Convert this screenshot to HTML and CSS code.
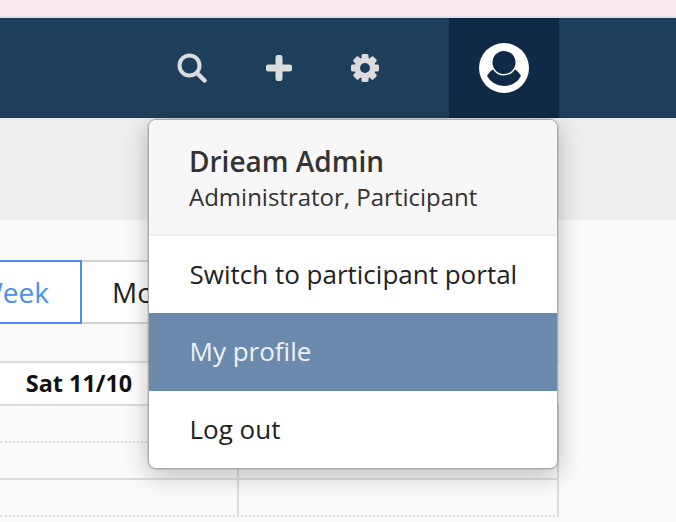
FILE: index.html
```html
<!DOCTYPE html>
<html lang="en">
<head>
<meta charset="utf-8">
<title>Calendar</title>
<link rel="stylesheet" href="styles.css">
</head>
<body>
<div class="strip"></div>
<header class="nav">
  <svg class="icon search" viewBox="0 0 30 30"><circle cx="12.500" cy="12.500" r="10" fill="none" stroke="#dcdcdc" stroke-width="4"/><path d="M20.500 20.500l7 7" stroke="#dcdcdc" stroke-width="4.500" stroke-linecap="round"/></svg>
  <svg class="icon plus" viewBox="0 0 26 26"><path d="M13 3v20M3 13h20" stroke="#dcdcdc" stroke-width="7" stroke-linecap="round"/></svg>
  <svg class="icon gear" viewBox="0 0 28 28"><g fill="#dcdcdc"><circle cx="14" cy="14" r="10.500"/><rect x="10.500" y="0" width="7" height="28" rx="1.500"/><rect x="10.500" y="0" width="7" height="28" rx="1.500" transform="rotate(45 14 14)"/><rect x="10.500" y="0" width="7" height="28" rx="1.500" transform="rotate(90 14 14)"/><rect x="10.500" y="0" width="7" height="28" rx="1.500" transform="rotate(135 14 14)"/></g><circle cx="14" cy="14" r="5" fill="#1e3f5c"/></svg>
  <div class="account">
    <svg class="avatar" viewBox="0 0 50 50"><circle cx="25" cy="25" r="25" fill="#fff"/><circle cx="25" cy="19.500" r="11.500" fill="#0e2a47"/><path d="M8 33C9 30.500 11.500 28 14 26.500A13 13 0 0 0 36 26.500C38.500 28 41 30.500 42 33A19.500 19.500 0 0 1 8 33z" fill="#0e2a47"/></svg>
  </div>
</header>
<div class="subbar"></div>
<main class="content">
  <div class="toggle">
    <div class="btn active"><span>Week</span></div>
    <div class="btn month">Month</div>
  </div>
  <div class="grid">
    <div class="grid-head"><div class="day">Sat 11/10</div><div class="day"></div><div class="day"></div></div>
    <div class="slot dotted"></div>
    <div class="slot solid"></div>
    <div class="slot dotted"></div>
    <div class="vline first"></div>
    <div class="vline last"></div>
  </div>
</main>
<div class="menu">
  <div class="menu-head">
    <div class="name">Drieam Admin</div>
    <div class="role">Administrator, Participant</div>
  </div>
  <div class="item">Switch to participant portal</div>
  <div class="item hover">My profile</div>
  <div class="item">Log out</div>
</div>
</body>
</html>
```
FILE: styles.css
```css
* { box-sizing: border-box; }
html, body { margin: 0; height: 522px; overflow: hidden; }
body { font-family: "Open Sans", sans-serif; color: #222; background: #fafafa; position: relative; }
.strip { height: 18px; background: #f7ebef; }
.nav { height: 100px; background: #1e3f5c; display: flex; align-items: center; padding-left: 177px; box-shadow: 0 -1px 2px rgba(0,0,0,.12); position: relative; }
.icon { display: block; flex: none; }
.search { width: 30px; height: 30px; margin-right: 59px; }
.plus { width: 26px; height: 26px; margin-right: 59px; }
.gear { width: 28px; height: 28px; margin-right: 70px; }
.account { width: 110px; height: 100px; background: #0e2a47; display: flex; align-items: center; justify-content: center; }
.avatar { width: 50px; height: 50px; display: block; }
.subbar { height: 102px; background: #eee; }
.content { height: 302px; background: #fafafa; padding-top: 40px; }
.toggle { display: flex; height: 64px; margin-left: -60px; }
.btn { height: 64px; font-size: 28px; line-height: 60px; border: 2px solid #d4d4d4; text-align: center; }
.btn.active { width: 142px; padding-left: 4px; border-color: #4a90f0; color: #4a90f0; background: #fff; }
.btn.month { width: 180px; border-left: 0; background: #fff; text-align: left; padding-left: 30px; }
.grid { width: 559px; margin-top: 37px; position: relative; }
.grid-head { display: grid; grid-template-columns: 158px 158px 1fr; height: 45px; border-top: 2px solid #ddd; border-bottom: 2px solid #ddd; background: #fff; }
.day { font-size: 23.400px; font-weight: 700; line-height: 41px; text-align: center; color: #111; }
.slot { height: 37px; }
.dotted { border-bottom: 2px dotted #ddd; }
.solid { border-bottom: 2px solid #ddd; }
.vline { position: absolute; top: 45px; bottom: 0; width: 2px; background: #ddd; }
.vline.first { left: 237px; }
.vline.last { left: 557px; }
.menu { position: absolute; left: 148px; top: 119px; width: 410px; height: 350px; background: #fff; border: 1px solid #aaa; border-radius: 8px; box-shadow: 0 0 0 1px rgba(0,0,0,.08), 0 6px 24px rgba(0,0,0,.25); overflow: hidden; }
.menu-head { height: 116px; background: #f7f7f7; border-bottom: 2px solid #eee; padding: 23px 40px 0; color: #333; }
.name { font-size: 28px; font-weight: 600; line-height: 36px; }
.role { font-size: 24px; line-height: 36px; }
.item { height: 77px; font-size: 26px; line-height: 77px; padding-left: 40.500px; color: #222; }
.item.hover { height: 78px; background: #6b8aad; color: #eef2f6; }
```
